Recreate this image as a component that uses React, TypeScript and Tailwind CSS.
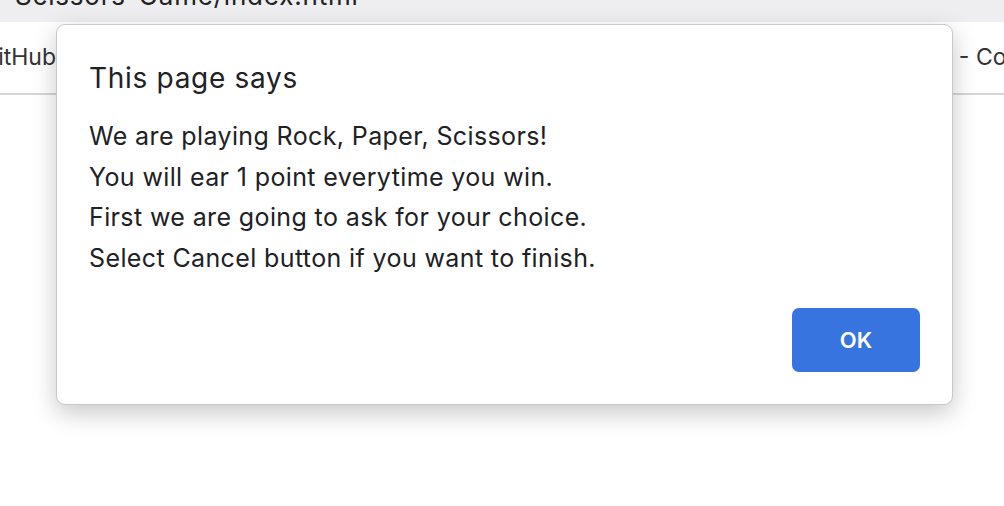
import React from "react";

export default function App() {
  return (
    <div className="relative w-[1004px] h-[506px] overflow-hidden bg-white" style={{ fontFamily: "Inter, 'Noto Sans', sans-serif" }}>
      <div className="h-[22px] bg-[#eeeef0] overflow-hidden">
        <div className="mt-[-19px] ml-[15px] text-[26px] leading-[30px] tracking-[0.8px] text-[#222] whitespace-nowrap">Scissors-Game/index.html</div>
      </div>
      <div className="h-[73px] border-b-2 border-[#d6d6d6] flex items-center justify-between text-[23px] text-[#333] whitespace-nowrap overflow-hidden">
        <span className="ml-[-19px]">GitHub</span>
        <span className="mr-[-30px]">- Code</span>
      </div>
      <div className="absolute left-[56px] top-[24px] w-[897px] h-[381px] bg-white rounded-[9px] border border-[#c8c8c8] shadow-[0_8px_24px_rgba(0,0,0,0.22)] px-[32px] pt-[36px]">
        <div className="text-[28px] leading-[34px] tracking-[0.7px] text-[#202124]">This page says</div>
        <div className="mt-[21px] text-[25px] leading-[40.5px] tracking-[0.38px] text-[#202124]">
          <div>We are playing Rock, Paper, Scissors!</div>
          <div>You will ear 1 point everytime you win.</div>
          <div>First we are going to ask for your choice.</div>
          <div>Select Cancel button if you want to finish.</div>
        </div>
        <div className="flex justify-end mt-[30px] pr-[0px]">
          <button className="w-[128px] h-[64px] rounded-[7px] bg-[#3874e0] text-white text-[22px] font-semibold">OK</button>
        </div>
      </div>
    </div>
  );
}
